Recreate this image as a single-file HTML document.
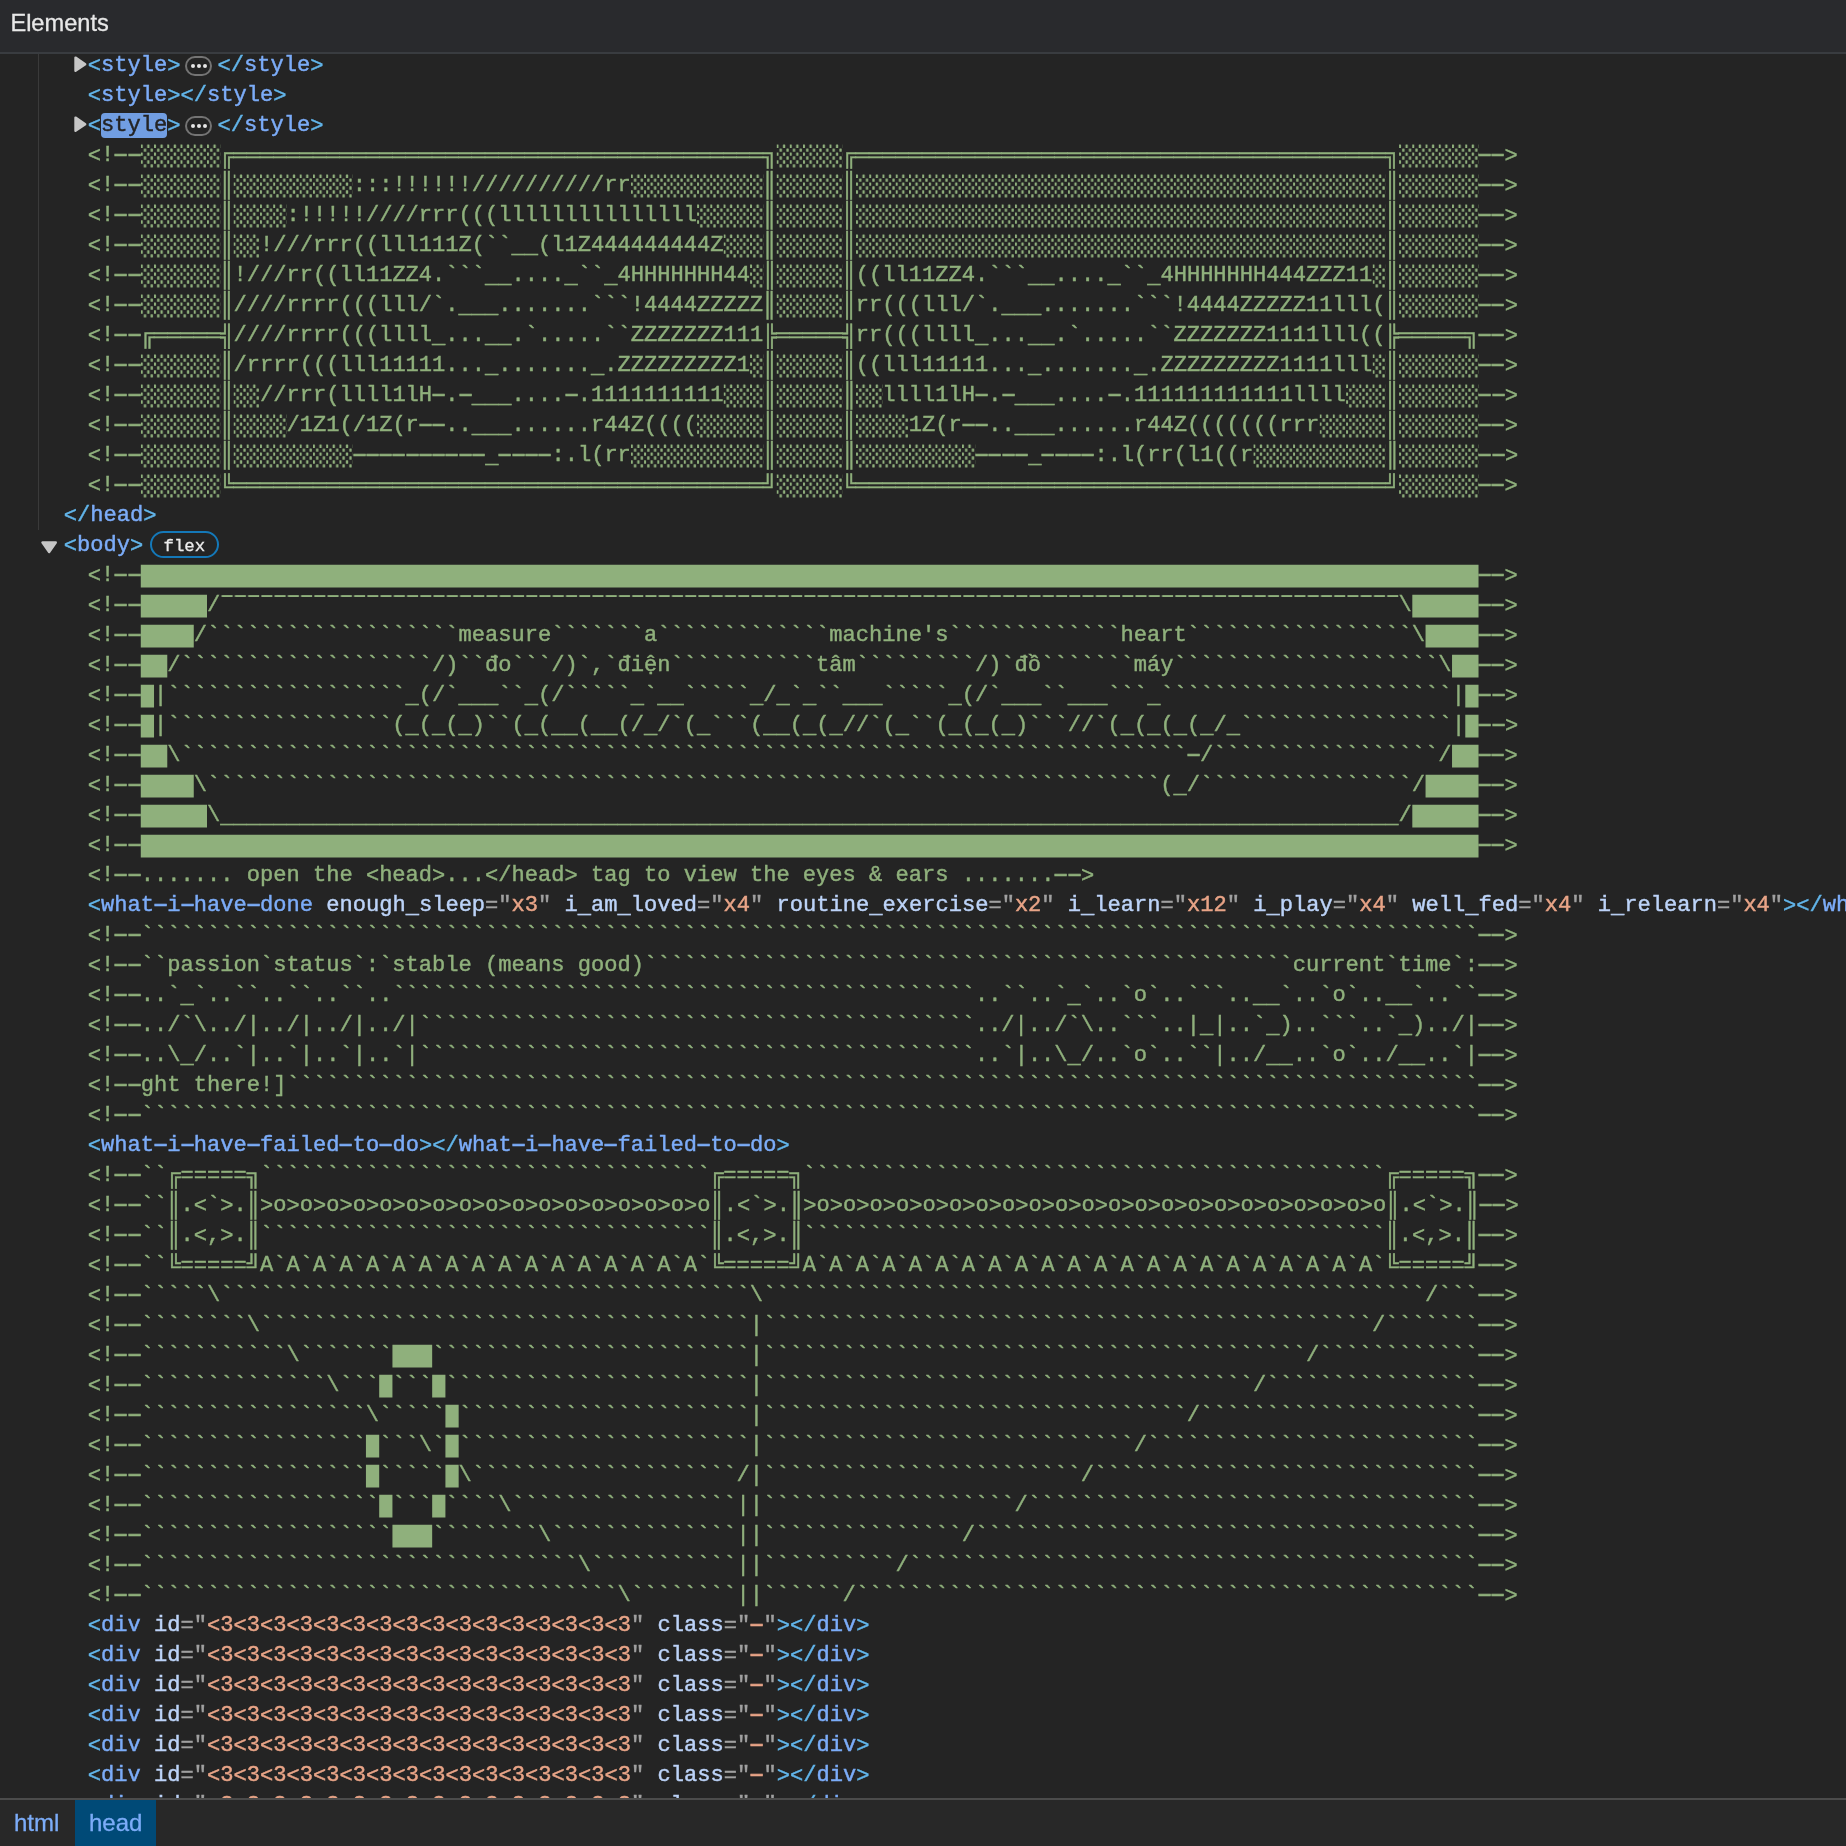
<!DOCTYPE html>
<html><head><meta charset="utf-8"><title>Elements</title>
<style>
html,body{margin:0;padding:0;width:1846px;height:1846px;overflow:hidden;background:#242424}
#tree{position:absolute;left:0;top:0;width:1846px;height:1846px;overflow:hidden}
#ov{position:absolute;left:0;top:0}
.l{position:absolute;height:30px;white-space:pre;font-family:"Liberation Mono",monospace;font-size:22.07px;line-height:30px;color:#e3e3e3}
.c{color:#8fb07c}
.hy{display:inline-block;transform:scale(1.9,1.08)}
.us{position:relative;top:2.2px}
.lg{position:relative;top:1.1px}
.bx{position:relative;top:1.4px}
.vb{display:inline-block;transform:scaleY(1.14)}
.l{-webkit-text-stroke:0.45px currentColor}
#tree{will-change:transform}
.br{color:#62b5ea}
.tg{color:#7cacf8}
.an{color:#bcd3f8}
.eq{color:#a0a0a0}
.av{color:#e8a487}
.sel{background:#719ee2;color:#242424;border-radius:4px}
#hdr{position:absolute;left:0;top:0;width:1846px;height:52px;background:#292a2d;border-bottom:2px solid #393c40;z-index:5}
#hdr span{position:absolute;left:10.4px;top:7.2px;font-family:"Liberation Sans",sans-serif;font-size:23.6px;line-height:32px;color:#e8e8e8}
#hdr,#foot{will-change:transform}
#hdr span,#foot span{-webkit-text-stroke:0.3px currentColor}
#foot{position:absolute;left:0;top:1798px;width:1846px;height:46px;background:#282828;border-top:2px solid #4b4b4b;z-index:5}
#foot span{position:absolute;top:0;height:46px;font-family:"Liberation Sans",sans-serif;font-size:24px;line-height:46px;color:#7cacf8}
#gut{position:absolute;left:38px;top:53px;width:1px;height:477px;background:#3a3a3a}
.tri{position:absolute}
.badge{position:absolute;box-sizing:border-box;border:2px solid #747474;border-radius:10px}
.dot{position:absolute;width:4px;height:4px;border-radius:50%;background:#e6e6e6}
#flex{position:absolute;left:150.3px;top:531.4px;width:68.7px;height:27.1px;box-sizing:border-box;border:2px solid #1478b8;border-radius:14px;font-family:"Liberation Mono",monospace;font-size:17.4px;line-height:23px;padding-top:2.4px;will-change:transform;-webkit-text-stroke:0.3px currentColor;color:#ececec;text-align:center}
</style></head><body>
<div id="tree">
<div id="gut"></div>
<div class="l" style="top:51.00px;left:87.80px"><span class="br"><span class="lg">&lt;</span></span><span class="tg">style</span><span class="br"><span class="lg">&gt;</span></span></div>
<div class="l" style="top:51.00px;left:217.60px"><span class="br"><span class="lg">&lt;</span>/</span><span class="tg">style</span><span class="br"><span class="lg">&gt;</span></span></div>
<div class="l" style="top:81.00px;left:87.80px"><span class="br"><span class="lg">&lt;</span></span><span class="tg">style</span><span class="br"><span class="lg">&gt;</span></span><span class="br"><span class="lg">&lt;</span>/</span><span class="tg">style</span><span class="br"><span class="lg">&gt;</span></span></div>
<div class="l" style="top:111.00px;left:87.80px"><span class="br"><span class="lg">&lt;</span></span><span class="tg sel">style</span><span class="br"><span class="lg">&gt;</span></span></div>
<div class="l" style="top:111.00px;left:217.60px"><span class="br"><span class="lg">&lt;</span>/</span><span class="tg">style</span><span class="br"><span class="lg">&gt;</span></span></div>
<div class="l" style="top:141.00px;left:87.80px"><span class="c"><span class="lg">&lt;</span>!<span class="hy">-</span><span class="hy">-</span>      <span class="bx">╔════════════════════════════════════════╗</span>     <span class="bx">╔════════════════════════════════════════╗</span>      <span class="hy">-</span><span class="hy">-</span><span class="lg">&gt;</span></span></div>
<div class="l" style="top:171.00px;left:87.80px"><span class="c"><span class="lg">&lt;</span>!<span class="hy">-</span><span class="hy">-</span>      <span class="vb">║</span>         :::!!!!!!//////////rr          <span class="vb">║</span>     <span class="vb">║</span>                                        <span class="vb">║</span>      <span class="hy">-</span><span class="hy">-</span><span class="lg">&gt;</span></span></div>
<div class="l" style="top:201.00px;left:87.80px"><span class="c"><span class="lg">&lt;</span>!<span class="hy">-</span><span class="hy">-</span>      <span class="vb">║</span>    :!!!!!////rrr(((lllllllllllllll     <span class="vb">║</span>     <span class="vb">║</span>                                        <span class="vb">║</span>      <span class="hy">-</span><span class="hy">-</span><span class="lg">&gt;</span></span></div>
<div class="l" style="top:231.00px;left:87.80px"><span class="c"><span class="lg">&lt;</span>!<span class="hy">-</span><span class="hy">-</span>      <span class="vb">║</span>  !///rrr((lll111Z(``<span class="us">__</span>(l1Z444444444Z   <span class="vb">║</span>     <span class="vb">║</span>                                        <span class="vb">║</span>      <span class="hy">-</span><span class="hy">-</span><span class="lg">&gt;</span></span></div>
<div class="l" style="top:261.00px;left:87.80px"><span class="c"><span class="lg">&lt;</span>!<span class="hy">-</span><span class="hy">-</span>      <span class="vb">║</span>!///rr((ll11ZZ4.```<span class="us">__</span>....<span class="us">_</span>``<span class="us">_</span>4HHHHHHH44 <span class="vb">║</span>     <span class="vb">║</span>((ll11ZZ4.```<span class="us">__</span>....<span class="us">_</span>``<span class="us">_</span>4HHHHHHH444ZZZ11 <span class="vb">║</span>      <span class="hy">-</span><span class="hy">-</span><span class="lg">&gt;</span></span></div>
<div class="l" style="top:291.00px;left:87.80px"><span class="c"><span class="lg">&lt;</span>!<span class="hy">-</span><span class="hy">-</span>      <span class="vb">║</span>////rrrr(((lll/`.<span class="us">___</span>.......```!4444ZZZZZ<span class="vb">║</span>     <span class="vb">║</span>rr(((lll/`.<span class="us">___</span>.......```!4444ZZZZZ11lll(<span class="vb">║</span>      <span class="hy">-</span><span class="hy">-</span><span class="lg">&gt;</span></span></div>
<div class="l" style="top:321.00px;left:87.80px"><span class="c"><span class="lg">&lt;</span>!<span class="hy">-</span><span class="hy">-</span><span class="bx">╔═════╣</span>////rrrr(((llll<span class="us">_</span>...<span class="us">__</span>.`.....``ZZZZZZZ111<span class="bx">╠═════╣</span>rr(((llll<span class="us">_</span>...<span class="us">__</span>.`.....``ZZZZZZZ1111lll((<span class="bx">╠═════╗</span><span class="hy">-</span><span class="hy">-</span><span class="lg">&gt;</span></span></div>
<div class="l" style="top:351.00px;left:87.80px"><span class="c"><span class="lg">&lt;</span>!<span class="hy">-</span><span class="hy">-</span>      <span class="vb">║</span>/rrrr(((lll11111...<span class="us">_</span>.......<span class="us">_</span>.ZZZZZZZZZ1 <span class="vb">║</span>     <span class="vb">║</span>((lll11111...<span class="us">_</span>.......<span class="us">_</span>.ZZZZZZZZZ1111lll <span class="vb">║</span>      <span class="hy">-</span><span class="hy">-</span><span class="lg">&gt;</span></span></div>
<div class="l" style="top:381.00px;left:87.80px"><span class="c"><span class="lg">&lt;</span>!<span class="hy">-</span><span class="hy">-</span>      <span class="vb">║</span>  //rrr(llll1lH<span class="hy">-</span>.<span class="hy">-</span><span class="us">___</span>....<span class="hy">-</span>.1111111111   <span class="vb">║</span>     <span class="vb">║</span>  llll1lH<span class="hy">-</span>.<span class="hy">-</span><span class="us">___</span>....<span class="hy">-</span>.111111111111llll   <span class="vb">║</span>      <span class="hy">-</span><span class="hy">-</span><span class="lg">&gt;</span></span></div>
<div class="l" style="top:411.00px;left:87.80px"><span class="c"><span class="lg">&lt;</span>!<span class="hy">-</span><span class="hy">-</span>      <span class="vb">║</span>    /1Z1(/1Z(r<span class="hy">-</span><span class="hy">-</span>..<span class="us">___</span>......r44Z((((     <span class="vb">║</span>     <span class="vb">║</span>    1Z(r<span class="hy">-</span><span class="hy">-</span>..<span class="us">___</span>......r44Z(((((((rrr     <span class="vb">║</span>      <span class="hy">-</span><span class="hy">-</span><span class="lg">&gt;</span></span></div>
<div class="l" style="top:441.00px;left:87.80px"><span class="c"><span class="lg">&lt;</span>!<span class="hy">-</span><span class="hy">-</span>      <span class="vb">║</span>         <span class="hy">-</span><span class="hy">-</span><span class="hy">-</span><span class="hy">-</span><span class="hy">-</span><span class="hy">-</span><span class="hy">-</span><span class="hy">-</span><span class="hy">-</span><span class="hy">-</span><span class="us">_</span><span class="hy">-</span><span class="hy">-</span><span class="hy">-</span><span class="hy">-</span>:.l(rr          <span class="vb">║</span>     <span class="vb">║</span>         <span class="hy">-</span><span class="hy">-</span><span class="hy">-</span><span class="hy">-</span><span class="us">_</span><span class="hy">-</span><span class="hy">-</span><span class="hy">-</span><span class="hy">-</span>:.l(rr(l1((r          <span class="vb">║</span>      <span class="hy">-</span><span class="hy">-</span><span class="lg">&gt;</span></span></div>
<div class="l" style="top:471.00px;left:87.80px"><span class="c"><span class="lg">&lt;</span>!<span class="hy">-</span><span class="hy">-</span>      <span class="bx">╚════════════════════════════════════════╝</span>     <span class="bx">╚════════════════════════════════════════╝</span>      <span class="hy">-</span><span class="hy">-</span><span class="lg">&gt;</span></span></div>
<div class="l" style="top:561.00px;left:87.80px"><span class="c"><span class="lg">&lt;</span>!<span class="hy">-</span><span class="hy">-</span>                                                                                                     <span class="hy">-</span><span class="hy">-</span><span class="lg">&gt;</span></span></div>
<div class="l" style="top:591.00px;left:87.80px"><span class="c"><span class="lg">&lt;</span>!<span class="hy">-</span><span class="hy">-</span>     /                                                                                         \     <span class="hy">-</span><span class="hy">-</span><span class="lg">&gt;</span></span></div>
<div class="l" style="top:621.00px;left:87.80px"><span class="c"><span class="lg">&lt;</span>!<span class="hy">-</span><span class="hy">-</span>    /```````````````````measure```````a`````````````machine's`````````````heart`````````````````\    <span class="hy">-</span><span class="hy">-</span><span class="lg">&gt;</span></span></div>
<div class="l" style="top:651.00px;left:87.80px"><span class="c"><span class="lg">&lt;</span>!<span class="hy">-</span><span class="hy">-</span>  /```````````````````/)``đo```/)`,`điện```````````tâm`````````/)`đồ```````máy````````````````````\  <span class="hy">-</span><span class="hy">-</span><span class="lg">&gt;</span></span></div>
<div class="l" style="top:681.00px;left:87.80px"><span class="c"><span class="lg">&lt;</span>!<span class="hy">-</span><span class="hy">-</span> |``````````````````<span class="us">_</span>(/`<span class="us">___</span>``<span class="us">_</span>(/`````<span class="us">_</span>`<span class="us">__</span>`````<span class="us">_</span>/<span class="us">_</span>`<span class="us">_</span>``<span class="us">___</span>`````<span class="us">_</span>(/`<span class="us">___</span>``<span class="us">___</span>```<span class="us">_</span>``````````````````````| <span class="hy">-</span><span class="hy">-</span><span class="lg">&gt;</span></span></div>
<div class="l" style="top:711.00px;left:87.80px"><span class="c"><span class="lg">&lt;</span>!<span class="hy">-</span><span class="hy">-</span> |`````````````````(<span class="us">_</span>(<span class="us">_</span>(<span class="us">_</span>)``(<span class="us">_</span>(<span class="us">__</span>(<span class="us">__</span>(/<span class="us">_</span>/`(<span class="us">_</span>```(<span class="us">__</span>(<span class="us">_</span>(<span class="us">_</span>//`(<span class="us">_</span>``(<span class="us">_</span>(<span class="us">_</span>(<span class="us">_</span>)```//`(<span class="us">_</span>(<span class="us">_</span>(<span class="us">_</span>(<span class="us">_</span>/<span class="us">_</span>````````````````| <span class="hy">-</span><span class="hy">-</span><span class="lg">&gt;</span></span></div>
<div class="l" style="top:741.00px;left:87.80px"><span class="c"><span class="lg">&lt;</span>!<span class="hy">-</span><span class="hy">-</span>  \````````````````````````````````````````````````````````````````````````````<span class="hy">-</span>/`````````````````/  <span class="hy">-</span><span class="hy">-</span><span class="lg">&gt;</span></span></div>
<div class="l" style="top:771.00px;left:87.80px"><span class="c"><span class="lg">&lt;</span>!<span class="hy">-</span><span class="hy">-</span>    \````````````````````````````````````````````````````````````````````````(<span class="us">_</span>/````````````````/    <span class="hy">-</span><span class="hy">-</span><span class="lg">&gt;</span></span></div>
<div class="l" style="top:801.00px;left:87.80px"><span class="c"><span class="lg">&lt;</span>!<span class="hy">-</span><span class="hy">-</span>     \<span class="us">_________________________________________________________________________________________</span>/     <span class="hy">-</span><span class="hy">-</span><span class="lg">&gt;</span></span></div>
<div class="l" style="top:831.00px;left:87.80px"><span class="c"><span class="lg">&lt;</span>!<span class="hy">-</span><span class="hy">-</span>                                                                                                     <span class="hy">-</span><span class="hy">-</span><span class="lg">&gt;</span></span></div>
<div class="l" style="top:861.00px;left:87.80px"><span class="c"><span class="lg">&lt;</span>!<span class="hy">-</span><span class="hy">-</span>....... open the <span class="lg">&lt;</span>head<span class="lg">&gt;</span>...<span class="lg">&lt;</span>/head<span class="lg">&gt;</span> tag to view the eyes &amp; ears .......<span class="hy">-</span><span class="hy">-</span><span class="lg">&gt;</span></span></div>
<div class="l" style="top:921.00px;left:87.80px"><span class="c"><span class="lg">&lt;</span>!<span class="hy">-</span><span class="hy">-</span>`````````````````````````````````````````````````````````````````````````````````````````````````````<span class="hy">-</span><span class="hy">-</span><span class="lg">&gt;</span></span></div>
<div class="l" style="top:951.00px;left:87.80px"><span class="c"><span class="lg">&lt;</span>!<span class="hy">-</span><span class="hy">-</span>``passion`status`:`stable (means good)`````````````````````````````````````````````````current`time`:<span class="hy">-</span><span class="hy">-</span><span class="lg">&gt;</span></span></div>
<div class="l" style="top:981.00px;left:87.80px"><span class="c"><span class="lg">&lt;</span>!<span class="hy">-</span><span class="hy">-</span>..`<span class="us">_</span>`..``..``..``..````````````````````````````````````````````..``..`<span class="us">_</span>`..`o`..```..<span class="us">__</span>`..`o`..<span class="us">__</span>`..``<span class="hy">-</span><span class="hy">-</span><span class="lg">&gt;</span></span></div>
<div class="l" style="top:1011.00px;left:87.80px"><span class="c"><span class="lg">&lt;</span>!<span class="hy">-</span><span class="hy">-</span>../`\../|../|../|../|``````````````````````````````````````````../|../`\..```..|<span class="us">_</span>|..`<span class="us">_</span>)..```..`<span class="us">_</span>)../|<span class="hy">-</span><span class="hy">-</span><span class="lg">&gt;</span></span></div>
<div class="l" style="top:1041.00px;left:87.80px"><span class="c"><span class="lg">&lt;</span>!<span class="hy">-</span><span class="hy">-</span>..\<span class="us">_</span>/..`|..`|..`|..`|``````````````````````````````````````````..`|..\<span class="us">_</span>/..`o`..``|../<span class="us">__</span>..`o`../<span class="us">__</span>..`|<span class="hy">-</span><span class="hy">-</span><span class="lg">&gt;</span></span></div>
<div class="l" style="top:1071.00px;left:87.80px"><span class="c"><span class="lg">&lt;</span>!<span class="hy">-</span><span class="hy">-</span>ght there!]``````````````````````````````````````````````````````````````````````````````````````````<span class="hy">-</span><span class="hy">-</span><span class="lg">&gt;</span></span></div>
<div class="l" style="top:1101.00px;left:87.80px"><span class="c"><span class="lg">&lt;</span>!<span class="hy">-</span><span class="hy">-</span>`````````````````````````````````````````````````````````````````````````````````````````````````````<span class="hy">-</span><span class="hy">-</span><span class="lg">&gt;</span></span></div>
<div class="l" style="top:1161.00px;left:87.80px"><span class="c"><span class="lg">&lt;</span>!<span class="hy">-</span><span class="hy">-</span>``<span class="bx">╔=====╗</span>``````````````````````````````````<span class="bx">╔=====╗</span>````````````````````````````````````````````<span class="bx">╔=====╗</span><span class="hy">-</span><span class="hy">-</span><span class="lg">&gt;</span></span></div>
<div class="l" style="top:1191.00px;left:87.80px"><span class="c"><span class="lg">&lt;</span>!<span class="hy">-</span><span class="hy">-</span>``<span class="vb">║</span>.<span class="lg">&lt;</span>`<span class="lg">&gt;</span>.<span class="vb">║</span><span class="lg">&gt;</span>o<span class="lg">&gt;</span>o<span class="lg">&gt;</span>o<span class="lg">&gt;</span>o<span class="lg">&gt;</span>o<span class="lg">&gt;</span>o<span class="lg">&gt;</span>o<span class="lg">&gt;</span>o<span class="lg">&gt;</span>o<span class="lg">&gt;</span>o<span class="lg">&gt;</span>o<span class="lg">&gt;</span>o<span class="lg">&gt;</span>o<span class="lg">&gt;</span>o<span class="lg">&gt;</span>o<span class="lg">&gt;</span>o<span class="lg">&gt;</span>o<span class="vb">║</span>.<span class="lg">&lt;</span>`<span class="lg">&gt;</span>.<span class="vb">║</span><span class="lg">&gt;</span>o<span class="lg">&gt;</span>o<span class="lg">&gt;</span>o<span class="lg">&gt;</span>o<span class="lg">&gt;</span>o<span class="lg">&gt;</span>o<span class="lg">&gt;</span>o<span class="lg">&gt;</span>o<span class="lg">&gt;</span>o<span class="lg">&gt;</span>o<span class="lg">&gt;</span>o<span class="lg">&gt;</span>o<span class="lg">&gt;</span>o<span class="lg">&gt;</span>o<span class="lg">&gt;</span>o<span class="lg">&gt;</span>o<span class="lg">&gt;</span>o<span class="lg">&gt;</span>o<span class="lg">&gt;</span>o<span class="lg">&gt;</span>o<span class="lg">&gt;</span>o<span class="lg">&gt;</span>o<span class="vb">║</span>.<span class="lg">&lt;</span>`<span class="lg">&gt;</span>.<span class="vb">║</span><span class="hy">-</span><span class="hy">-</span><span class="lg">&gt;</span></span></div>
<div class="l" style="top:1221.00px;left:87.80px"><span class="c"><span class="lg">&lt;</span>!<span class="hy">-</span><span class="hy">-</span>``<span class="vb">║</span>.<span class="lg">&lt;</span>,<span class="lg">&gt;</span>.<span class="vb">║</span>``````````````````````````````````<span class="vb">║</span>.<span class="lg">&lt;</span>,<span class="lg">&gt;</span>.<span class="vb">║</span>````````````````````````````````````````````<span class="vb">║</span>.<span class="lg">&lt;</span>,<span class="lg">&gt;</span>.<span class="vb">║</span><span class="hy">-</span><span class="hy">-</span><span class="lg">&gt;</span></span></div>
<div class="l" style="top:1251.00px;left:87.80px"><span class="c"><span class="lg">&lt;</span>!<span class="hy">-</span><span class="hy">-</span>``<span class="bx">╚=====╝</span>A`A`A`A`A`A`A`A`A`A`A`A`A`A`A`A`A`<span class="bx">╚=====╝</span>A`A`A`A`A`A`A`A`A`A`A`A`A`A`A`A`A`A`A`A`A`A`<span class="bx">╚=====╝</span><span class="hy">-</span><span class="hy">-</span><span class="lg">&gt;</span></span></div>
<div class="l" style="top:1281.00px;left:87.80px"><span class="c"><span class="lg">&lt;</span>!<span class="hy">-</span><span class="hy">-</span>`````\````````````````````````````````````````\``````````````````````````````````````````````````/```<span class="hy">-</span><span class="hy">-</span><span class="lg">&gt;</span></span></div>
<div class="l" style="top:1311.00px;left:87.80px"><span class="c"><span class="lg">&lt;</span>!<span class="hy">-</span><span class="hy">-</span>````````\`````````````````````````````````````|``````````````````````````````````````````````/```````<span class="hy">-</span><span class="hy">-</span><span class="lg">&gt;</span></span></div>
<div class="l" style="top:1341.00px;left:87.80px"><span class="c"><span class="lg">&lt;</span>!<span class="hy">-</span><span class="hy">-</span>```````````\```````   ````````````````````````|`````````````````````````````````````````/````````````<span class="hy">-</span><span class="hy">-</span><span class="lg">&gt;</span></span></div>
<div class="l" style="top:1371.00px;left:87.80px"><span class="c"><span class="lg">&lt;</span>!<span class="hy">-</span><span class="hy">-</span>``````````````\``` ``` ```````````````````````|`````````````````````````````````````/````````````````<span class="hy">-</span><span class="hy">-</span><span class="lg">&gt;</span></span></div>
<div class="l" style="top:1401.00px;left:87.80px"><span class="c"><span class="lg">&lt;</span>!<span class="hy">-</span><span class="hy">-</span>`````````````````\````` ``````````````````````|````````````````````````````````/`````````````````````<span class="hy">-</span><span class="hy">-</span><span class="lg">&gt;</span></span></div>
<div class="l" style="top:1431.00px;left:87.80px"><span class="c"><span class="lg">&lt;</span>!<span class="hy">-</span><span class="hy">-</span>````````````````` ```\` ``````````````````````|````````````````````````````/`````````````````````````<span class="hy">-</span><span class="hy">-</span><span class="lg">&gt;</span></span></div>
<div class="l" style="top:1461.00px;left:87.80px"><span class="c"><span class="lg">&lt;</span>!<span class="hy">-</span><span class="hy">-</span>````````````````` ````` \````````````````````/|````````````````````````/`````````````````````````````<span class="hy">-</span><span class="hy">-</span><span class="lg">&gt;</span></span></div>
<div class="l" style="top:1491.00px;left:87.80px"><span class="c"><span class="lg">&lt;</span>!<span class="hy">-</span><span class="hy">-</span>`````````````````` ``` ````\`````````````````||```````````````````/``````````````````````````````````<span class="hy">-</span><span class="hy">-</span><span class="lg">&gt;</span></span></div>
<div class="l" style="top:1521.00px;left:87.80px"><span class="c"><span class="lg">&lt;</span>!<span class="hy">-</span><span class="hy">-</span>```````````````````   ````````\``````````````||```````````````/``````````````````````````````````````<span class="hy">-</span><span class="hy">-</span><span class="lg">&gt;</span></span></div>
<div class="l" style="top:1551.00px;left:87.80px"><span class="c"><span class="lg">&lt;</span>!<span class="hy">-</span><span class="hy">-</span>`````````````````````````````````\```````````||``````````/```````````````````````````````````````````<span class="hy">-</span><span class="hy">-</span><span class="lg">&gt;</span></span></div>
<div class="l" style="top:1581.00px;left:87.80px"><span class="c"><span class="lg">&lt;</span>!<span class="hy">-</span><span class="hy">-</span>````````````````````````````````````\````````||``````/```````````````````````````````````````````````<span class="hy">-</span><span class="hy">-</span><span class="lg">&gt;</span></span></div>
<div class="l" style="top:501.00px;left:63.80px"><span class="br"><span class="lg">&lt;</span>/</span><span class="tg">head</span><span class="br"><span class="lg">&gt;</span></span></div>
<div class="l" style="top:531.00px;left:63.80px"><span class="br"><span class="lg">&lt;</span></span><span class="tg">body</span><span class="br"><span class="lg">&gt;</span></span></div>
<div class="l" style="top:891.00px;left:87.80px"><span class="br"><span class="lg">&lt;</span></span><span class="tg">what<span class="hy">-</span>i<span class="hy">-</span>have<span class="hy">-</span>done</span> <span class="an">enough<span class="us">_</span>sleep</span><span class="eq"><span class="bx">=</span>&quot;</span><span class="av">x3</span><span class="eq">&quot;</span> <span class="an">i<span class="us">_</span>am<span class="us">_</span>loved</span><span class="eq"><span class="bx">=</span>&quot;</span><span class="av">x4</span><span class="eq">&quot;</span> <span class="an">routine<span class="us">_</span>exercise</span><span class="eq"><span class="bx">=</span>&quot;</span><span class="av">x2</span><span class="eq">&quot;</span> <span class="an">i<span class="us">_</span>learn</span><span class="eq"><span class="bx">=</span>&quot;</span><span class="av">x12</span><span class="eq">&quot;</span> <span class="an">i<span class="us">_</span>play</span><span class="eq"><span class="bx">=</span>&quot;</span><span class="av">x4</span><span class="eq">&quot;</span> <span class="an">well<span class="us">_</span>fed</span><span class="eq"><span class="bx">=</span>&quot;</span><span class="av">x4</span><span class="eq">&quot;</span> <span class="an">i<span class="us">_</span>relearn</span><span class="eq"><span class="bx">=</span>&quot;</span><span class="av">x4</span><span class="eq">&quot;</span><span class="br"><span class="lg">&gt;</span></span><span class="br"><span class="lg">&lt;</span>/</span><span class="tg">what<span class="hy">-</span>i<span class="hy">-</span>have<span class="hy">-</span>done</span><span class="br"><span class="lg">&gt;</span></span></div>
<div class="l" style="top:1131.00px;left:87.80px"><span class="br"><span class="lg">&lt;</span></span><span class="tg">what<span class="hy">-</span>i<span class="hy">-</span>have<span class="hy">-</span>failed<span class="hy">-</span>to<span class="hy">-</span>do</span><span class="br"><span class="lg">&gt;</span></span><span class="br"><span class="lg">&lt;</span>/</span><span class="tg">what<span class="hy">-</span>i<span class="hy">-</span>have<span class="hy">-</span>failed<span class="hy">-</span>to<span class="hy">-</span>do</span><span class="br"><span class="lg">&gt;</span></span></div>
<div class="l" style="top:1611.00px;left:87.80px"><span class="br"><span class="lg">&lt;</span></span><span class="tg">div</span> <span class="an">id</span><span class="eq"><span class="bx">=</span>&quot;</span><span class="av"><span class="lg">&lt;</span>3<span class="lg">&lt;</span>3<span class="lg">&lt;</span>3<span class="lg">&lt;</span>3<span class="lg">&lt;</span>3<span class="lg">&lt;</span>3<span class="lg">&lt;</span>3<span class="lg">&lt;</span>3<span class="lg">&lt;</span>3<span class="lg">&lt;</span>3<span class="lg">&lt;</span>3<span class="lg">&lt;</span>3<span class="lg">&lt;</span>3<span class="lg">&lt;</span>3<span class="lg">&lt;</span>3<span class="lg">&lt;</span>3</span><span class="eq">&quot;</span> <span class="an">class</span><span class="eq"><span class="bx">=</span>&quot;</span><span class="av"><span class="hy">-</span></span><span class="eq">&quot;</span><span class="br"><span class="lg">&gt;</span></span><span class="br"><span class="lg">&lt;</span>/</span><span class="tg">div</span><span class="br"><span class="lg">&gt;</span></span></div>
<div class="l" style="top:1641.00px;left:87.80px"><span class="br"><span class="lg">&lt;</span></span><span class="tg">div</span> <span class="an">id</span><span class="eq"><span class="bx">=</span>&quot;</span><span class="av"><span class="lg">&lt;</span>3<span class="lg">&lt;</span>3<span class="lg">&lt;</span>3<span class="lg">&lt;</span>3<span class="lg">&lt;</span>3<span class="lg">&lt;</span>3<span class="lg">&lt;</span>3<span class="lg">&lt;</span>3<span class="lg">&lt;</span>3<span class="lg">&lt;</span>3<span class="lg">&lt;</span>3<span class="lg">&lt;</span>3<span class="lg">&lt;</span>3<span class="lg">&lt;</span>3<span class="lg">&lt;</span>3<span class="lg">&lt;</span>3</span><span class="eq">&quot;</span> <span class="an">class</span><span class="eq"><span class="bx">=</span>&quot;</span><span class="av"><span class="hy">-</span></span><span class="eq">&quot;</span><span class="br"><span class="lg">&gt;</span></span><span class="br"><span class="lg">&lt;</span>/</span><span class="tg">div</span><span class="br"><span class="lg">&gt;</span></span></div>
<div class="l" style="top:1671.00px;left:87.80px"><span class="br"><span class="lg">&lt;</span></span><span class="tg">div</span> <span class="an">id</span><span class="eq"><span class="bx">=</span>&quot;</span><span class="av"><span class="lg">&lt;</span>3<span class="lg">&lt;</span>3<span class="lg">&lt;</span>3<span class="lg">&lt;</span>3<span class="lg">&lt;</span>3<span class="lg">&lt;</span>3<span class="lg">&lt;</span>3<span class="lg">&lt;</span>3<span class="lg">&lt;</span>3<span class="lg">&lt;</span>3<span class="lg">&lt;</span>3<span class="lg">&lt;</span>3<span class="lg">&lt;</span>3<span class="lg">&lt;</span>3<span class="lg">&lt;</span>3<span class="lg">&lt;</span>3</span><span class="eq">&quot;</span> <span class="an">class</span><span class="eq"><span class="bx">=</span>&quot;</span><span class="av"><span class="hy">-</span></span><span class="eq">&quot;</span><span class="br"><span class="lg">&gt;</span></span><span class="br"><span class="lg">&lt;</span>/</span><span class="tg">div</span><span class="br"><span class="lg">&gt;</span></span></div>
<div class="l" style="top:1701.00px;left:87.80px"><span class="br"><span class="lg">&lt;</span></span><span class="tg">div</span> <span class="an">id</span><span class="eq"><span class="bx">=</span>&quot;</span><span class="av"><span class="lg">&lt;</span>3<span class="lg">&lt;</span>3<span class="lg">&lt;</span>3<span class="lg">&lt;</span>3<span class="lg">&lt;</span>3<span class="lg">&lt;</span>3<span class="lg">&lt;</span>3<span class="lg">&lt;</span>3<span class="lg">&lt;</span>3<span class="lg">&lt;</span>3<span class="lg">&lt;</span>3<span class="lg">&lt;</span>3<span class="lg">&lt;</span>3<span class="lg">&lt;</span>3<span class="lg">&lt;</span>3<span class="lg">&lt;</span>3</span><span class="eq">&quot;</span> <span class="an">class</span><span class="eq"><span class="bx">=</span>&quot;</span><span class="av"><span class="hy">-</span></span><span class="eq">&quot;</span><span class="br"><span class="lg">&gt;</span></span><span class="br"><span class="lg">&lt;</span>/</span><span class="tg">div</span><span class="br"><span class="lg">&gt;</span></span></div>
<div class="l" style="top:1731.00px;left:87.80px"><span class="br"><span class="lg">&lt;</span></span><span class="tg">div</span> <span class="an">id</span><span class="eq"><span class="bx">=</span>&quot;</span><span class="av"><span class="lg">&lt;</span>3<span class="lg">&lt;</span>3<span class="lg">&lt;</span>3<span class="lg">&lt;</span>3<span class="lg">&lt;</span>3<span class="lg">&lt;</span>3<span class="lg">&lt;</span>3<span class="lg">&lt;</span>3<span class="lg">&lt;</span>3<span class="lg">&lt;</span>3<span class="lg">&lt;</span>3<span class="lg">&lt;</span>3<span class="lg">&lt;</span>3<span class="lg">&lt;</span>3<span class="lg">&lt;</span>3<span class="lg">&lt;</span>3</span><span class="eq">&quot;</span> <span class="an">class</span><span class="eq"><span class="bx">=</span>&quot;</span><span class="av"><span class="hy">-</span></span><span class="eq">&quot;</span><span class="br"><span class="lg">&gt;</span></span><span class="br"><span class="lg">&lt;</span>/</span><span class="tg">div</span><span class="br"><span class="lg">&gt;</span></span></div>
<div class="l" style="top:1761.00px;left:87.80px"><span class="br"><span class="lg">&lt;</span></span><span class="tg">div</span> <span class="an">id</span><span class="eq"><span class="bx">=</span>&quot;</span><span class="av"><span class="lg">&lt;</span>3<span class="lg">&lt;</span>3<span class="lg">&lt;</span>3<span class="lg">&lt;</span>3<span class="lg">&lt;</span>3<span class="lg">&lt;</span>3<span class="lg">&lt;</span>3<span class="lg">&lt;</span>3<span class="lg">&lt;</span>3<span class="lg">&lt;</span>3<span class="lg">&lt;</span>3<span class="lg">&lt;</span>3<span class="lg">&lt;</span>3<span class="lg">&lt;</span>3<span class="lg">&lt;</span>3<span class="lg">&lt;</span>3</span><span class="eq">&quot;</span> <span class="an">class</span><span class="eq"><span class="bx">=</span>&quot;</span><span class="av"><span class="hy">-</span></span><span class="eq">&quot;</span><span class="br"><span class="lg">&gt;</span></span><span class="br"><span class="lg">&lt;</span>/</span><span class="tg">div</span><span class="br"><span class="lg">&gt;</span></span></div>
<div class="l" style="top:1791.00px;left:87.80px"><span class="br"><span class="lg">&lt;</span></span><span class="tg">div</span> <span class="an">id</span><span class="eq"><span class="bx">=</span>&quot;</span><span class="av"><span class="lg">&lt;</span>3<span class="lg">&lt;</span>3<span class="lg">&lt;</span>3<span class="lg">&lt;</span>3<span class="lg">&lt;</span>3<span class="lg">&lt;</span>3<span class="lg">&lt;</span>3<span class="lg">&lt;</span>3<span class="lg">&lt;</span>3<span class="lg">&lt;</span>3<span class="lg">&lt;</span>3<span class="lg">&lt;</span>3<span class="lg">&lt;</span>3<span class="lg">&lt;</span>3<span class="lg">&lt;</span>3<span class="lg">&lt;</span>3</span><span class="eq">&quot;</span> <span class="an">class</span><span class="eq"><span class="bx">=</span>&quot;</span><span class="av"><span class="hy">-</span></span><span class="eq">&quot;</span><span class="br"><span class="lg">&gt;</span></span><span class="br"><span class="lg">&lt;</span>/</span><span class="tg">div</span><span class="br"><span class="lg">&gt;</span></span></div>
<svg id="ov" width="1846" height="1846" viewBox="0 0 1846 1846"><defs><pattern id="ovl" patternUnits="userSpaceOnUse" x="87.800" y="51.000" width="13.245" height="30"><rect x="1.35" y="4.1" width="11.1" height="1.9" fill="#8fb07c"/></pattern><pattern id="shade" patternUnits="userSpaceOnUse" x="87.800" y="51.000" width="13.245" height="30"><rect x="-0.33" y="3.55" width="2.30" height="3.40" rx="0.5" fill="#8fb07c"/><rect x="6.42" y="3.55" width="2.30" height="3.40" rx="0.5" fill="#8fb07c"/><rect x="3.07" y="7.45" width="2.30" height="3.40" rx="0.5" fill="#8fb07c"/><rect x="9.85" y="7.45" width="2.30" height="3.40" rx="0.5" fill="#8fb07c"/><rect x="-0.33" y="11.40" width="2.30" height="3.40" rx="0.5" fill="#8fb07c"/><rect x="6.42" y="11.40" width="2.30" height="3.40" rx="0.5" fill="#8fb07c"/><rect x="3.07" y="15.30" width="2.30" height="3.40" rx="0.5" fill="#8fb07c"/><rect x="9.85" y="15.30" width="2.30" height="3.40" rx="0.5" fill="#8fb07c"/><rect x="-0.33" y="19.25" width="2.30" height="3.40" rx="0.5" fill="#8fb07c"/><rect x="6.42" y="19.25" width="2.30" height="3.40" rx="0.5" fill="#8fb07c"/><rect x="3.07" y="23.20" width="2.30" height="3.40" rx="0.5" fill="#8fb07c"/><rect x="9.85" y="23.20" width="2.30" height="3.40" rx="0.5" fill="#8fb07c"/></pattern></defs><rect x="140.780" y="141.000" width="79.470" height="30" fill="url(#shade)"/><rect x="776.540" y="141.000" width="66.225" height="30" fill="url(#shade)"/><rect x="1399.055" y="141.000" width="79.470" height="30" fill="url(#shade)"/><rect x="140.780" y="171.000" width="79.470" height="30" fill="url(#shade)"/><rect x="233.495" y="171.000" width="119.205" height="30" fill="url(#shade)"/><rect x="630.845" y="171.000" width="132.450" height="30" fill="url(#shade)"/><rect x="776.540" y="171.000" width="66.225" height="30" fill="url(#shade)"/><rect x="856.010" y="171.000" width="529.800" height="30" fill="url(#shade)"/><rect x="1399.055" y="171.000" width="79.470" height="30" fill="url(#shade)"/><rect x="140.780" y="201.000" width="79.470" height="30" fill="url(#shade)"/><rect x="233.495" y="201.000" width="52.980" height="30" fill="url(#shade)"/><rect x="697.070" y="201.000" width="66.225" height="30" fill="url(#shade)"/><rect x="776.540" y="201.000" width="66.225" height="30" fill="url(#shade)"/><rect x="856.010" y="201.000" width="529.800" height="30" fill="url(#shade)"/><rect x="1399.055" y="201.000" width="79.470" height="30" fill="url(#shade)"/><rect x="140.780" y="231.000" width="79.470" height="30" fill="url(#shade)"/><rect x="233.495" y="231.000" width="26.490" height="30" fill="url(#shade)"/><rect x="723.560" y="231.000" width="39.735" height="30" fill="url(#shade)"/><rect x="776.540" y="231.000" width="66.225" height="30" fill="url(#shade)"/><rect x="856.010" y="231.000" width="529.800" height="30" fill="url(#shade)"/><rect x="1399.055" y="231.000" width="79.470" height="30" fill="url(#shade)"/><rect x="140.780" y="261.000" width="79.470" height="30" fill="url(#shade)"/><rect x="750.050" y="261.000" width="13.245" height="30" fill="url(#shade)"/><rect x="776.540" y="261.000" width="66.225" height="30" fill="url(#shade)"/><rect x="1372.565" y="261.000" width="13.245" height="30" fill="url(#shade)"/><rect x="1399.055" y="261.000" width="79.470" height="30" fill="url(#shade)"/><rect x="140.780" y="291.000" width="79.470" height="30" fill="url(#shade)"/><rect x="776.540" y="291.000" width="66.225" height="30" fill="url(#shade)"/><rect x="1399.055" y="291.000" width="79.470" height="30" fill="url(#shade)"/><rect x="140.780" y="351.000" width="79.470" height="30" fill="url(#shade)"/><rect x="750.050" y="351.000" width="13.245" height="30" fill="url(#shade)"/><rect x="776.540" y="351.000" width="66.225" height="30" fill="url(#shade)"/><rect x="1372.565" y="351.000" width="13.245" height="30" fill="url(#shade)"/><rect x="1399.055" y="351.000" width="79.470" height="30" fill="url(#shade)"/><rect x="140.780" y="381.000" width="79.470" height="30" fill="url(#shade)"/><rect x="233.495" y="381.000" width="26.490" height="30" fill="url(#shade)"/><rect x="723.560" y="381.000" width="39.735" height="30" fill="url(#shade)"/><rect x="776.540" y="381.000" width="66.225" height="30" fill="url(#shade)"/><rect x="856.010" y="381.000" width="26.490" height="30" fill="url(#shade)"/><rect x="1346.075" y="381.000" width="39.735" height="30" fill="url(#shade)"/><rect x="1399.055" y="381.000" width="79.470" height="30" fill="url(#shade)"/><rect x="140.780" y="411.000" width="79.470" height="30" fill="url(#shade)"/><rect x="233.495" y="411.000" width="52.980" height="30" fill="url(#shade)"/><rect x="697.070" y="411.000" width="66.225" height="30" fill="url(#shade)"/><rect x="776.540" y="411.000" width="66.225" height="30" fill="url(#shade)"/><rect x="856.010" y="411.000" width="52.980" height="30" fill="url(#shade)"/><rect x="1319.585" y="411.000" width="66.225" height="30" fill="url(#shade)"/><rect x="1399.055" y="411.000" width="79.470" height="30" fill="url(#shade)"/><rect x="140.780" y="441.000" width="79.470" height="30" fill="url(#shade)"/><rect x="233.495" y="441.000" width="119.205" height="30" fill="url(#shade)"/><rect x="630.845" y="441.000" width="132.450" height="30" fill="url(#shade)"/><rect x="776.540" y="441.000" width="66.225" height="30" fill="url(#shade)"/><rect x="856.010" y="441.000" width="119.205" height="30" fill="url(#shade)"/><rect x="1253.360" y="441.000" width="132.450" height="30" fill="url(#shade)"/><rect x="1399.055" y="441.000" width="79.470" height="30" fill="url(#shade)"/><rect x="140.780" y="471.000" width="79.470" height="30" fill="url(#shade)"/><rect x="776.540" y="471.000" width="66.225" height="30" fill="url(#shade)"/><rect x="1399.055" y="471.000" width="79.470" height="30" fill="url(#shade)"/><rect x="140.780" y="564.750" width="1337.745" height="22.750" fill="#8fb07c"/><rect x="140.780" y="594.750" width="66.225" height="22.750" fill="#8fb07c"/><rect x="1412.300" y="594.750" width="66.225" height="22.750" fill="#8fb07c"/><rect x="220.250" y="591.000" width="1178.805" height="30" fill="url(#ovl)"/><rect x="140.780" y="624.750" width="52.980" height="22.750" fill="#8fb07c"/><rect x="1425.545" y="624.750" width="52.980" height="22.750" fill="#8fb07c"/><rect x="140.780" y="654.750" width="26.490" height="22.750" fill="#8fb07c"/><rect x="1452.035" y="654.750" width="26.490" height="22.750" fill="#8fb07c"/><rect x="140.780" y="684.750" width="13.245" height="22.750" fill="#8fb07c"/><rect x="1465.280" y="684.750" width="13.245" height="22.750" fill="#8fb07c"/><rect x="140.780" y="714.750" width="13.245" height="22.750" fill="#8fb07c"/><rect x="1465.280" y="714.750" width="13.245" height="22.750" fill="#8fb07c"/><rect x="140.780" y="744.750" width="26.490" height="22.750" fill="#8fb07c"/><rect x="1452.035" y="744.750" width="26.490" height="22.750" fill="#8fb07c"/><rect x="140.780" y="774.750" width="52.980" height="22.750" fill="#8fb07c"/><rect x="1425.545" y="774.750" width="52.980" height="22.750" fill="#8fb07c"/><rect x="140.780" y="804.750" width="66.225" height="22.750" fill="#8fb07c"/><rect x="1412.300" y="804.750" width="66.225" height="22.750" fill="#8fb07c"/><rect x="140.780" y="834.750" width="1337.745" height="22.750" fill="#8fb07c"/><rect x="392.435" y="1344.750" width="39.735" height="22.750" fill="#8fb07c"/><rect x="379.190" y="1374.750" width="13.245" height="22.750" fill="#8fb07c"/><rect x="432.170" y="1374.750" width="13.245" height="22.750" fill="#8fb07c"/><rect x="445.415" y="1404.750" width="13.245" height="22.750" fill="#8fb07c"/><rect x="365.945" y="1434.750" width="13.245" height="22.750" fill="#8fb07c"/><rect x="445.415" y="1434.750" width="13.245" height="22.750" fill="#8fb07c"/><rect x="365.945" y="1464.750" width="13.245" height="22.750" fill="#8fb07c"/><rect x="445.415" y="1464.750" width="13.245" height="22.750" fill="#8fb07c"/><rect x="379.190" y="1494.750" width="13.245" height="22.750" fill="#8fb07c"/><rect x="432.170" y="1494.750" width="13.245" height="22.750" fill="#8fb07c"/><rect x="392.435" y="1524.750" width="39.735" height="22.750" fill="#8fb07c"/></svg>
<svg class="tri" style="left:73.9px;top:56px" width="13" height="17" viewBox="0 0 13 17"><path d="M1.5 1.6 L11.2 8.2 L1.5 14.8 Z" fill="#c6c6c6" stroke="#c6c6c6" stroke-width="2.4" stroke-linejoin="round"/></svg>
<svg class="tri" style="left:73.9px;top:116px" width="13" height="17" viewBox="0 0 13 17"><path d="M1.5 1.6 L11.2 8.2 L1.5 14.8 Z" fill="#c6c6c6" stroke="#c6c6c6" stroke-width="2.4" stroke-linejoin="round"/></svg>
<svg class="tri" style="left:40.8px;top:541px" width="17" height="13" viewBox="0 0 17 13"><path d="M1.5 1.5 L14.8 1.5 L8.15 11.0 Z" fill="#c6c6c6" stroke="#c6c6c6" stroke-width="2.4" stroke-linejoin="round"/></svg>
<div class="badge" style="left:185.3px;top:56px;width:27.2px;height:19.6px"><div class="dot" style="left:3.3px;top:5.8px"></div><div class="dot" style="left:9.6px;top:5.8px"></div><div class="dot" style="left:15.6px;top:5.8px"></div></div>
<div class="badge" style="left:185.3px;top:116px;width:27.2px;height:19.6px"><div class="dot" style="left:3.3px;top:5.8px"></div><div class="dot" style="left:9.6px;top:5.8px"></div><div class="dot" style="left:15.6px;top:5.8px"></div></div>
<div id="flex">flex</div>
</div>
<div id="hdr"><span>Elements</span></div>
<div id="foot"><span style="left:14px">html</span><span style="left:75px;width:81px;background:#004a77;padding-left:14px;box-sizing:border-box">head</span></div>
</body></html>
